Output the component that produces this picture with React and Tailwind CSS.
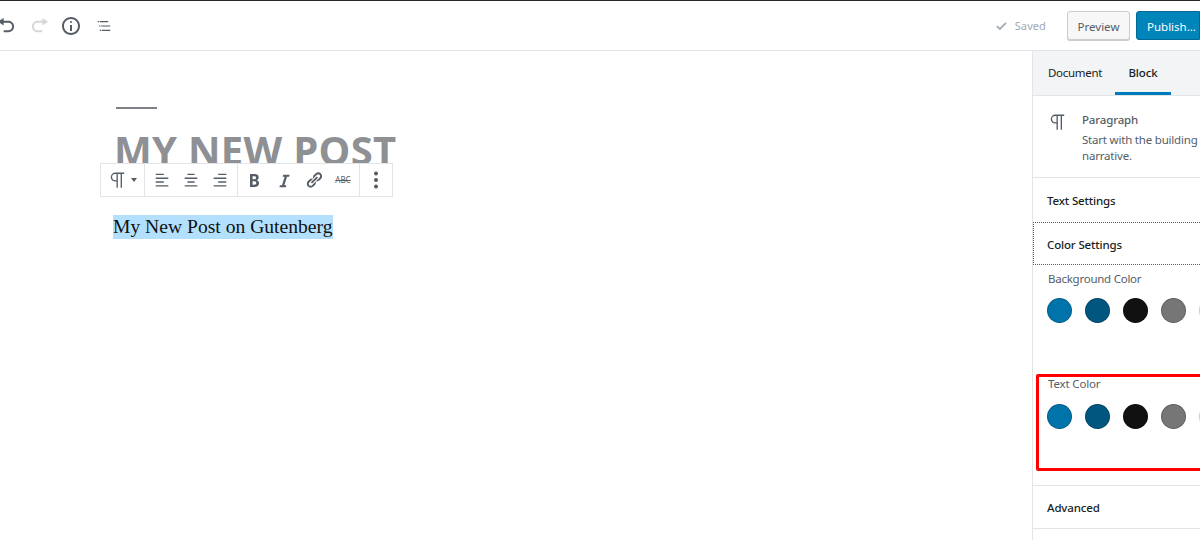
import React from 'react';

const PATHS = {
  undo: 'M12 5H7V2L1 6l6 4V7h5c2.2 0 4 1.8 4 4s-1.8 4-4 4H7v2h5c3.3 0 6-2.7 6-6s-2.7-6-6-6z',
  redo: 'M8 5h5V2l6 4-6 4V7H8c-2.2 0-4 1.8-4 4s1.8 4 4 4h5v2H8c-3.3 0-6-2.7-6-6s2.7-6 6-6z',
  info: 'M9 15h2V9H9v6zm1-10c-.5 0-1 .5-1 1s.5 1 1 1 1-.5 1-1-.5-1-1-1zm0-4c-5 0-9 4-9 9s4 9 9 9 9-4 9-9-4-9-9-9zm0 16c-3.9 0-7-3.1-7-7s3.1-7 7-7 7 3.1 7 7-3.1 7-7 7z',
  list: 'M1 3h2v1.6H1zM4 3h12v1.6H4zM3 9.2h2v1.6H3zM6 9.2h13v1.6H6zM4 15.4h2V17H4zM7 15.4h12V17H7z',
  alignLeft: 'M12 4.5V3H3v1.5h9zm5 4.3V7.3H3v1.5h14zm-5 4.2v-1.5H3V13h9zm5 4.3v-1.5H3v1.5h14z',
  alignCenter: 'M14 4.5V3H6v1.5h8zm3 4.3V7.3H3v1.5h14zM14 13v-1.5H6V13h8zm3 4.3v-1.5H3v1.5h14z',
  alignRight: 'M17 4.5V3H8v1.5h9zm0 4.3V7.3H3v1.5h14zm0 4.2v-1.5H8V13h9zm0 4.3v-1.5H3v1.5h14z',
  bold: 'M6 4v13h4.54c1.37 0 2.46-.33 3.26-1 .8-.66 1.2-1.58 1.2-2.77 0-.84-.17-1.51-.51-2.01s-.9-.85-1.67-1.03v-.09c.57-.1 1.02-.4 1.36-.9s.51-1.13.51-1.91c0-1.14-.39-1.98-1.17-2.5C12.75 4.26 11.5 4 9.78 4H6zm2.57 5.15V6.26h1.36c.73 0 1.27.11 1.61.32.34.22.51.58.51 1.07 0 .54-.16.92-.47 1.15s-.82.35-1.52.35H8.57zm0 2.13h1.6c1.44 0 2.16.53 2.16 1.61 0 .6-.17 1.05-.51 1.34s-.86.43-1.57.43H8.57v-3.38z',
  italic: 'M14.78 6h-2.13l-2.8 9h2.12l-.62 2H4.6l.62-2h2.14l2.8-9H8.03l.62-2h6.75z',
  link: 'M17.74 2.76c1.68 1.69 1.68 4.41 0 6.1l-1.53 1.52c-1.12 1.12-2.7 1.47-4.14 1.09l2.62-2.61.76-.77.76-.76c.84-.84.84-2.2 0-3.04-.84-.85-2.2-.85-3.04 0l-.77.76-3.38 3.38c-.37-1.44-.02-3.02 1.1-4.14l1.52-1.53c1.69-1.68 4.42-1.68 6.1 0zM8.59 13.43l5.34-5.34c.42-.42.42-1.1 0-1.52-.44-.43-1.13-.39-1.53 0l-5.33 5.34c-.42.42-.42 1.1 0 1.52.44.43 1.13.39 1.52 0zm-.76 2.29l4.14-4.15c.38 1.44.03 3.02-1.09 4.14l-1.52 1.53c-1.69 1.68-4.41 1.68-6.1 0-1.68-1.68-1.68-4.42 0-6.1l1.53-1.52c1.12-1.12 2.7-1.47 4.14-1.1l-4.14 4.15c-.85.84-.85 2.2 0 3.05.84.84 2.2.84 3.04 0z',
  check: 'M16.3 4.6l-8 8-3.3-3.3-1.8 1.8 5.1 5.1 9.8-9.8z',
  more: 'M10 1.6a2 2 0 1 0 0 4 2 2 0 0 0 0-4zM10 8a2 2 0 1 0 0 4 2 2 0 0 0 0-4zm0 6.4a2 2 0 1 0 0 4 2 2 0 0 0 0-4z',
};

const Icon = ({ name, className }) => (
  <svg viewBox="0 0 20 20" fill="currentColor" className={className}>
    <path d={PATHS[name]} />
  </svg>
);

// hollow pilcrow, the dashicon reads as outlined at this size
const Pilcrow = ({ className }) => (
  <svg viewBox="0 0 20 20" fill="none" stroke="currentColor" strokeWidth="1.5" className={className}>
    <path d="M18 2.5H8a4.2 4.2 0 0 0 0 8.4h2.2M10.2 2.5V18.5M14.8 2.5V18.5" />
  </svg>
);

const swatches = ['bg-[#0073aa]', 'bg-[#00567f]', 'bg-[#111111]', 'bg-[#767676]', 'bg-white'];

const ColorRow = ({ className }) => (
  <div className={`flex gap-[13px] -ml-px ${className}`}>
    {swatches.map((c) => (
      <span key={c} className={`w-[25px] h-[25px] shrink-0 rounded-full border border-black/20 ${c}`} />
    ))}
  </div>
);

export default function App() {
  return (
    <div className="w-[1200px] h-[540px] overflow-hidden bg-white relative font-['Noto_Sans',sans-serif]">
      <div className="h-px bg-[#23282d]" />

      {/* Top bar */}
      <header className="h-[50px] flex items-center border-b border-[#e2e4e7] text-[#555d66]">
        <div className="flex items-center -ml-[3px]">
          <Icon name="undo" className="w-[19px] h-[19px]" />
          <Icon name="redo" className="w-[19px] h-[19px] ml-[14px] text-[#d5d8db]" />
          <Icon name="info" className="w-[20px] h-[20px] ml-[12px]" />
          <Icon name="list" className="w-[14px] h-[14px] ml-[16px]" />
        </div>
        <div className="ml-auto flex items-center">
          <Icon name="check" className="w-[14px] h-[14px] text-[#a2aab2]" />
          <span className="ml-[7px] text-[11px] tracking-[0.1px] pt-px text-[#a2aab2]">Saved</span>
          <button className="ml-[21px] w-[63px] h-[29px] rounded-[3px] border border-[#cccccc] bg-[#f7f7f7] text-[11.5px] pt-[2px] text-[#555d66] shadow-[0_1px_0_#cccccc]">
            Preview
          </button>
          <button className="ml-[6px] w-[64px] h-[29px] rounded-l-[3px] border border-[#006a95] bg-[#0085ba] text-[11.5px] pt-[2px] text-white text-left pl-[10px] whitespace-nowrap">
            Publish...
          </button>
        </div>
      </header>

      <div className="flex h-[489px]">
        {/* Editor */}
        <main className="w-[1032px] shrink-0 relative pl-[115px] pt-[56px]">
          <div className="w-[41px] h-[2px] bg-[#7e8287] ml-px" />
          <h1 className="mt-[18px] -ml-px text-[40px] leading-[46px] font-bold text-[#8e9094] whitespace-nowrap font-['Open_Sans',sans-serif] tracking-[0.3px]">
            MY NEW POST
          </h1>
          <div className="absolute left-[100px] top-[112px] h-[34px] flex items-stretch border border-[#e2e4e7] bg-white text-[#555d66]">
            <div className="w-[44px] flex items-center pl-[7px] border-r border-[#e2e4e7]">
              <Pilcrow className="w-[18px] h-[18px]" />
              <span className="ml-[5px] w-0 h-0 border-x-[3px] border-x-transparent border-t-[4px] border-t-[#555d66]" />
            </div>
            <div className="w-[93px] flex items-center justify-between px-[8px] border-r border-[#e2e4e7]">
              <Icon name="alignLeft" className="w-[18px] h-[18px]" />
              <Icon name="alignCenter" className="w-[18px] h-[18px]" />
              <Icon name="alignRight" className="w-[18px] h-[18px]" />
            </div>
            <div className="w-[122px] flex items-center justify-between pl-[6px] pr-[7px] border-r border-[#e2e4e7]">
              <Icon name="bold" className="w-[20px] h-[20px]" />
              <Icon name="italic" className="w-[19px] h-[19px]" />
              <Icon name="link" className="w-[18px] h-[18px]" />
              <span className="w-[18px] text-center text-[8px] leading-none line-through">ABC</span>
            </div>
            <div className="w-[32px] flex items-center justify-center">
              <Icon name="more" className="w-[20px] h-[20px]" />
            </div>
          </div>
          <p className="mt-[42px] -ml-[2px] w-fit bg-[#b3e1fd] text-[#111111] text-[19.6px] leading-[24px] font-['Liberation_Serif',serif] whitespace-nowrap">
            My New Post on Gutenberg
          </p>
        </main>

        {/* Sidebar */}
        <aside className="w-[280px] shrink-0 border-l border-[#e2e4e7] text-[11.5px] tracking-[-0.15px] text-[#191e23]">
          <div className="h-[45px] flex items-stretch bg-[#f3f4f5] border-b border-[#e2e4e7]">
            <span className="ml-[15px] w-[53px] flex items-center tracking-[-0.3px]">Document</span>
            <span className="ml-[14px] w-[56px] flex items-center justify-center pt-[3px] border-b-[3px] border-[#007cba] font-medium">Block</span>
          </div>

          <div className="h-[82px] flex border-b border-[#e2e4e7] pl-[15px] pt-[15px]">
            <Pilcrow className="w-[18px] h-[18px] text-[#555d66] shrink-0 mt-[2px]" />
            <div className="ml-[16px] text-[#555d66] w-[210px] shrink-0">
              <div className="font-medium leading-[18px]">Paragraph</div>
              <div className="mt-[3px] leading-[16px] w-[205px] tracking-[-0.2px]">
                Start with the building block of all narrative.
              </div>
            </div>
          </div>

          <div className="h-[44px] flex items-center pl-[14px] pt-[2px] font-medium">Text Settings</div>
          <div className="h-[43px] flex items-center pl-[13px] pt-[2px] font-medium border-y border-l border-dotted border-[#555d66]">Color Settings</div>

          <div className="h-[221px] border-b border-[#e2e4e7] pl-[15px] pt-[6px] text-[#555d66]">
            <div className="leading-[16px] tracking-[-0.25px]">Background Color</div>
            <ColorRow className="mt-[11px]" />
            <div className="mt-[53px] leading-[16px]">Text Color</div>
            <ColorRow className="mt-[12px]" />
          </div>

          <div className="h-[43px] flex items-center pl-[14px] pt-px font-medium border-b border-[#e2e4e7]">Advanced</div>
        </aside>
      </div>

      {/* Red annotation */}
      <div className="absolute left-[1036px] top-[374px] w-[180px] h-[97px] border-[3px] border-[#ff0000] rounded-[2px]" />
    </div>
  );
}
